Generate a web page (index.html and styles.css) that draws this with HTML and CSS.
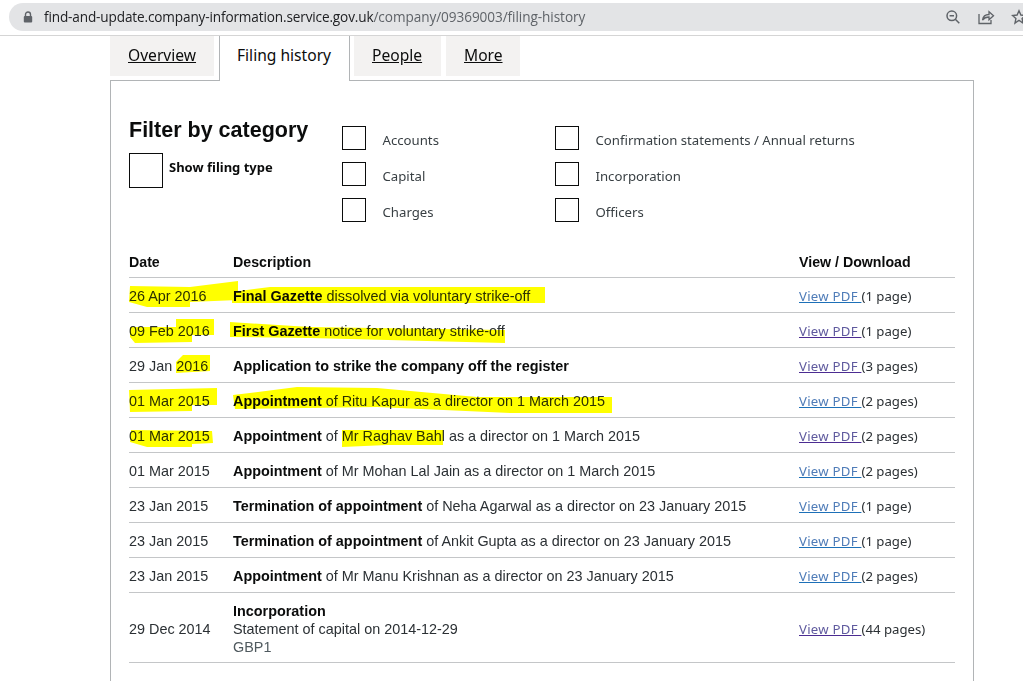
FILE: index.html
```html
<!DOCTYPE html>
<html lang="en">
<head>
<meta charset="utf-8">
<title>Filing history</title>
<link rel="stylesheet" href="styles.css">
</head>
<body>
<header class="browser">
  <div class="omnibox">
    <svg class="lock" width="10" height="12" viewBox="0 0 10 12"><path d="M2.5 5V3.5a2.5 2.5 0 0 1 5 0V5" fill="none" stroke="#5f6368" stroke-width="1.4"/><rect x="0.8" y="5" width="8.4" height="6.4" rx="1" fill="#5f6368"/></svg>
    <span class="url"><span class="host">find-and-update.company-information.service.gov.uk</span>/company/09369003/filing-history</span>
    <span class="tools">
      <svg width="16" height="16" viewBox="0 0 16 16"><circle cx="6.8" cy="6.8" r="4.8" fill="none" stroke="#5f6368" stroke-width="1.5"/><path d="M4.6 6.8h4.4M10.3 10.3l4 4" stroke="#5f6368" stroke-width="1.5" fill="none"/></svg>
      <svg width="18" height="16" viewBox="0 0 18 16"><path d="M2 5v9.500h12V11" fill="none" stroke="#5f6368" stroke-width="1.3"/><path d="M5.500 11c.5-3.500 3-5.500 6.500-5.500V2.800l4.500 4-4.500 4V8c-2.500 0-5 1-6.500 3z" fill="none" stroke="#5f6368" stroke-width="1.3"/></svg>
      <svg width="16" height="16" viewBox="0 0 16 16"><path d="M8 1.800l1.900 4.200 4.600.5-3.400 3.100.9 4.500L8 11.300l-4 2.800.9-4.500L1.500 6.500 6.100 6z" fill="none" stroke="#5f6368" stroke-width="1.4"/></svg>
    </span>
  </div>
</header>

<main class="page">
  <nav class="tabs">
    <a class="tab" href="#">Overview</a>
    <span class="tab tab-current">Filing history</span>
    <a class="tab" href="#">People</a>
    <a class="tab" href="#">More</a>
  </nav>

  <section class="panel">
    <div class="filters">
      <div class="filter-lead">
        <h2 class="filter-title">Filter by category</h2>
        <div class="show-type"><span class="box box-large"></span><span class="show-label">Show filing type</span></div>
      </div>
      <div class="options">
        <div class="option"><span class="box"></span><span>Accounts</span></div>
        <div class="option"><span class="box"></span><span>Confirmation statements / Annual returns</span></div>
        <div class="option"><span class="box"></span><span>Capital</span></div>
        <div class="option"><span class="box"></span><span>Incorporation</span></div>
        <div class="option"><span class="box"></span><span>Charges</span></div>
        <div class="option"><span class="box"></span><span>Officers</span></div>
      </div>
    </div>

    <div class="history">
      <div class="row row-head"><span>Date</span><span>Description</span><span>View / Download</span></div>
      <div class="row"><span>26 Apr 2016</span><span><b>Final Gazette</b> dissolved via voluntary strike-off</span><span class="cell-pdf"><a class="pdf" href="#">View PDF </a>(1 page)</span></div>
      <div class="row"><span>09 Feb 2016</span><span><b>First Gazette</b> notice for voluntary strike-off</span><span class="cell-pdf"><a class="pdf pdf-seen" href="#">View PDF </a>(1 page)</span></div>
      <div class="row"><span>29 Jan 2016</span><span><b>Application to strike the company off the register</b></span><span class="cell-pdf"><a class="pdf pdf-seen" href="#">View PDF </a>(3 pages)</span></div>
      <div class="row"><span>01 Mar 2015</span><span><b>Appointment</b> of Ritu Kapur as a director on 1 March 2015</span><span class="cell-pdf"><a class="pdf" href="#">View PDF </a>(2 pages)</span></div>
      <div class="row"><span>01 Mar 2015</span><span><b>Appointment</b> of Mr Raghav Bahl as a director on 1 March 2015</span><span class="cell-pdf"><a class="pdf pdf-seen" href="#">View PDF </a>(2 pages)</span></div>
      <div class="row"><span>01 Mar 2015</span><span><b>Appointment</b> of Mr Mohan Lal Jain as a director on 1 March 2015</span><span class="cell-pdf"><a class="pdf" href="#">View PDF </a>(2 pages)</span></div>
      <div class="row"><span>23 Jan 2015</span><span><b>Termination of appointment</b> of Neha Agarwal as a director on 23 January 2015</span><span class="cell-pdf"><a class="pdf" href="#">View PDF </a>(1 page)</span></div>
      <div class="row"><span>23 Jan 2015</span><span><b>Termination of appointment</b> of Ankit Gupta as a director on 23 January 2015</span><span class="cell-pdf"><a class="pdf" href="#">View PDF </a>(1 page)</span></div>
      <div class="row"><span>23 Jan 2015</span><span><b>Appointment</b> of Mr Manu Krishnan as a director on 23 January 2015</span><span class="cell-pdf"><a class="pdf" href="#">View PDF </a>(2 pages)</span></div>
      <div class="row row-tall"><span>29 Dec 2014</span><span class="stack"><b>Incorporation</b><span>Statement of capital on 2014-12-29</span><span class="muted">GBP1</span></span><span class="cell-pdf"><a class="pdf pdf-seen" href="#">View PDF </a>(44 pages)</span></div>
    </div>
  </section>
</main>

<svg class="marker" width="1023" height="681" viewBox="0 0 1023 681" aria-hidden="true">
  <g fill="#ffff00">
    <polygon points="130,286 190,287 238,281 238,300 190,302 190,307 147,307 129,302"/>
    <polygon points="232,292 270,287 545,287 545,303 232,303"/>
    <polygon points="130,327 176,327 176,319 214,319 214,335 192,335 192,342 135,343 130,337"/>
    <polygon points="230,322 310,327 505,330 505,343 310,338 230,337"/>
    <polygon points="176,362 183,355 210,355 210,371 176,373"/>
    <polygon points="129,390 217,388 217,405 192,405 192,411 130,412"/>
    <polygon points="233,395 297,387 377,388 477,397 612,397 612,413 510,413 377,407 235,409"/>
    <polygon points="131,430 212,431 213,443 192,444 192,447 147,447 130,442"/>
    <polygon points="342,430 443,430 443,445 387,445 342,447"/>
  </g>
</svg>
</body>
</html>
```
FILE: styles.css
```css
* { box-sizing: border-box; }
html, body { margin: 0; height: 681px; overflow: hidden; background: #fff; }
body { position: relative; color: #0b0c0c; font-family: "Liberation Sans", Arial, sans-serif; }

.browser { height: 36px; padding: 3px 0 0 9px; border-bottom: 1px solid #d5d5d5; }
.omnibox { display: flex; align-items: center; height: 28px; padding-left: 14px; background: #e3e4e6; border-radius: 14px 0 0 14px; }
.lock { flex: none; }
.url { margin-left: 11px; font: 13.600px/28px "Open Sans", sans-serif; letter-spacing: -0.07px; color: #5f6368; white-space: nowrap; }
.host { color: #202124; letter-spacing: -0.14px; }
.tools { display: flex; align-items: center; gap: 16px; margin-left: auto; margin-right: -4px; }

.page { padding-left: 110px; width: 974px; }
.tabs { display: flex; height: 44px; font: 15.600px/38px "Noto Sans", sans-serif; white-space: nowrap; }
.tab { height: 40px; padding: 0 18px; background: #f3f2f1; color: #0b0c0c; }
.tab:nth-child(1) { width: 104px; }
.tab:nth-child(3) { width: 87px; margin-left: 4px; }
.tab:nth-child(4) { width: 74px; margin-left: 5px; }
.tab-current { width: 131px; height: 45px; margin-left: 5px; padding-left: 17px; background: #fff; border: solid #b1b4b6; border-width: 0 1px; position: relative; z-index: 1; }

.panel { height: 601px; padding: 36px 18px 0; border: solid #b1b4b6; border-width: 1px 1px 0; }

.filters { display: flex; }
.filter-lead { width: 213px; flex: none; }
.filter-title { margin: 0; font: bold 21.500px/26px "Liberation Sans", Arial, sans-serif; color: #0b0c0c; white-space: nowrap; }
.show-type { display: flex; gap: 6px; margin-top: 10px; }
.show-label { font: bold 13px/28px "Noto Sans", sans-serif; }
.box { display: block; flex: none; width: 24px; height: 24px; background: #fff; border: 1px solid #0b0c0c; }
.box-large { width: 34px; height: 35px; }
.options { display: grid; grid-template-columns: 213px auto; grid-auto-rows: 24px; row-gap: 12px; margin-top: 9px; font: 13.200px/29px "Noto Sans", sans-serif; color: #383f43; }
.option { display: flex; gap: 16.500px; }
.option span:last-child { white-space: nowrap; }

.history { margin-top: 23px; font-size: 14.400px; color: #2b3034; }
.row { display: grid; grid-template-columns: 104px 566px 156px; align-items: center; height: 35px; padding-top: 2px; border-bottom: 1px solid #c4c6c8; line-height: 18px; white-space: nowrap; }
.row b { color: #0b0c0c; }
.row-head { height: 33px; font-size: 14.200px; font-weight: bold; color: #0b0c0c; }
.row-tall { height: 70px; }
.stack { display: flex; flex-direction: column; }
.muted { color: #505a5f; }
.cell-pdf { font: 13.200px/18px "Noto Sans", sans-serif; }
.pdf { color: #4f7cb8; text-decoration-color: #1d70b8; letter-spacing: 0.25px; }
.pdf-seen { color: #5f5a9e; text-decoration-color: #4c2c92; }

.marker { position: absolute; left: 0; top: 0; mix-blend-mode: multiply; pointer-events: none; }
```
